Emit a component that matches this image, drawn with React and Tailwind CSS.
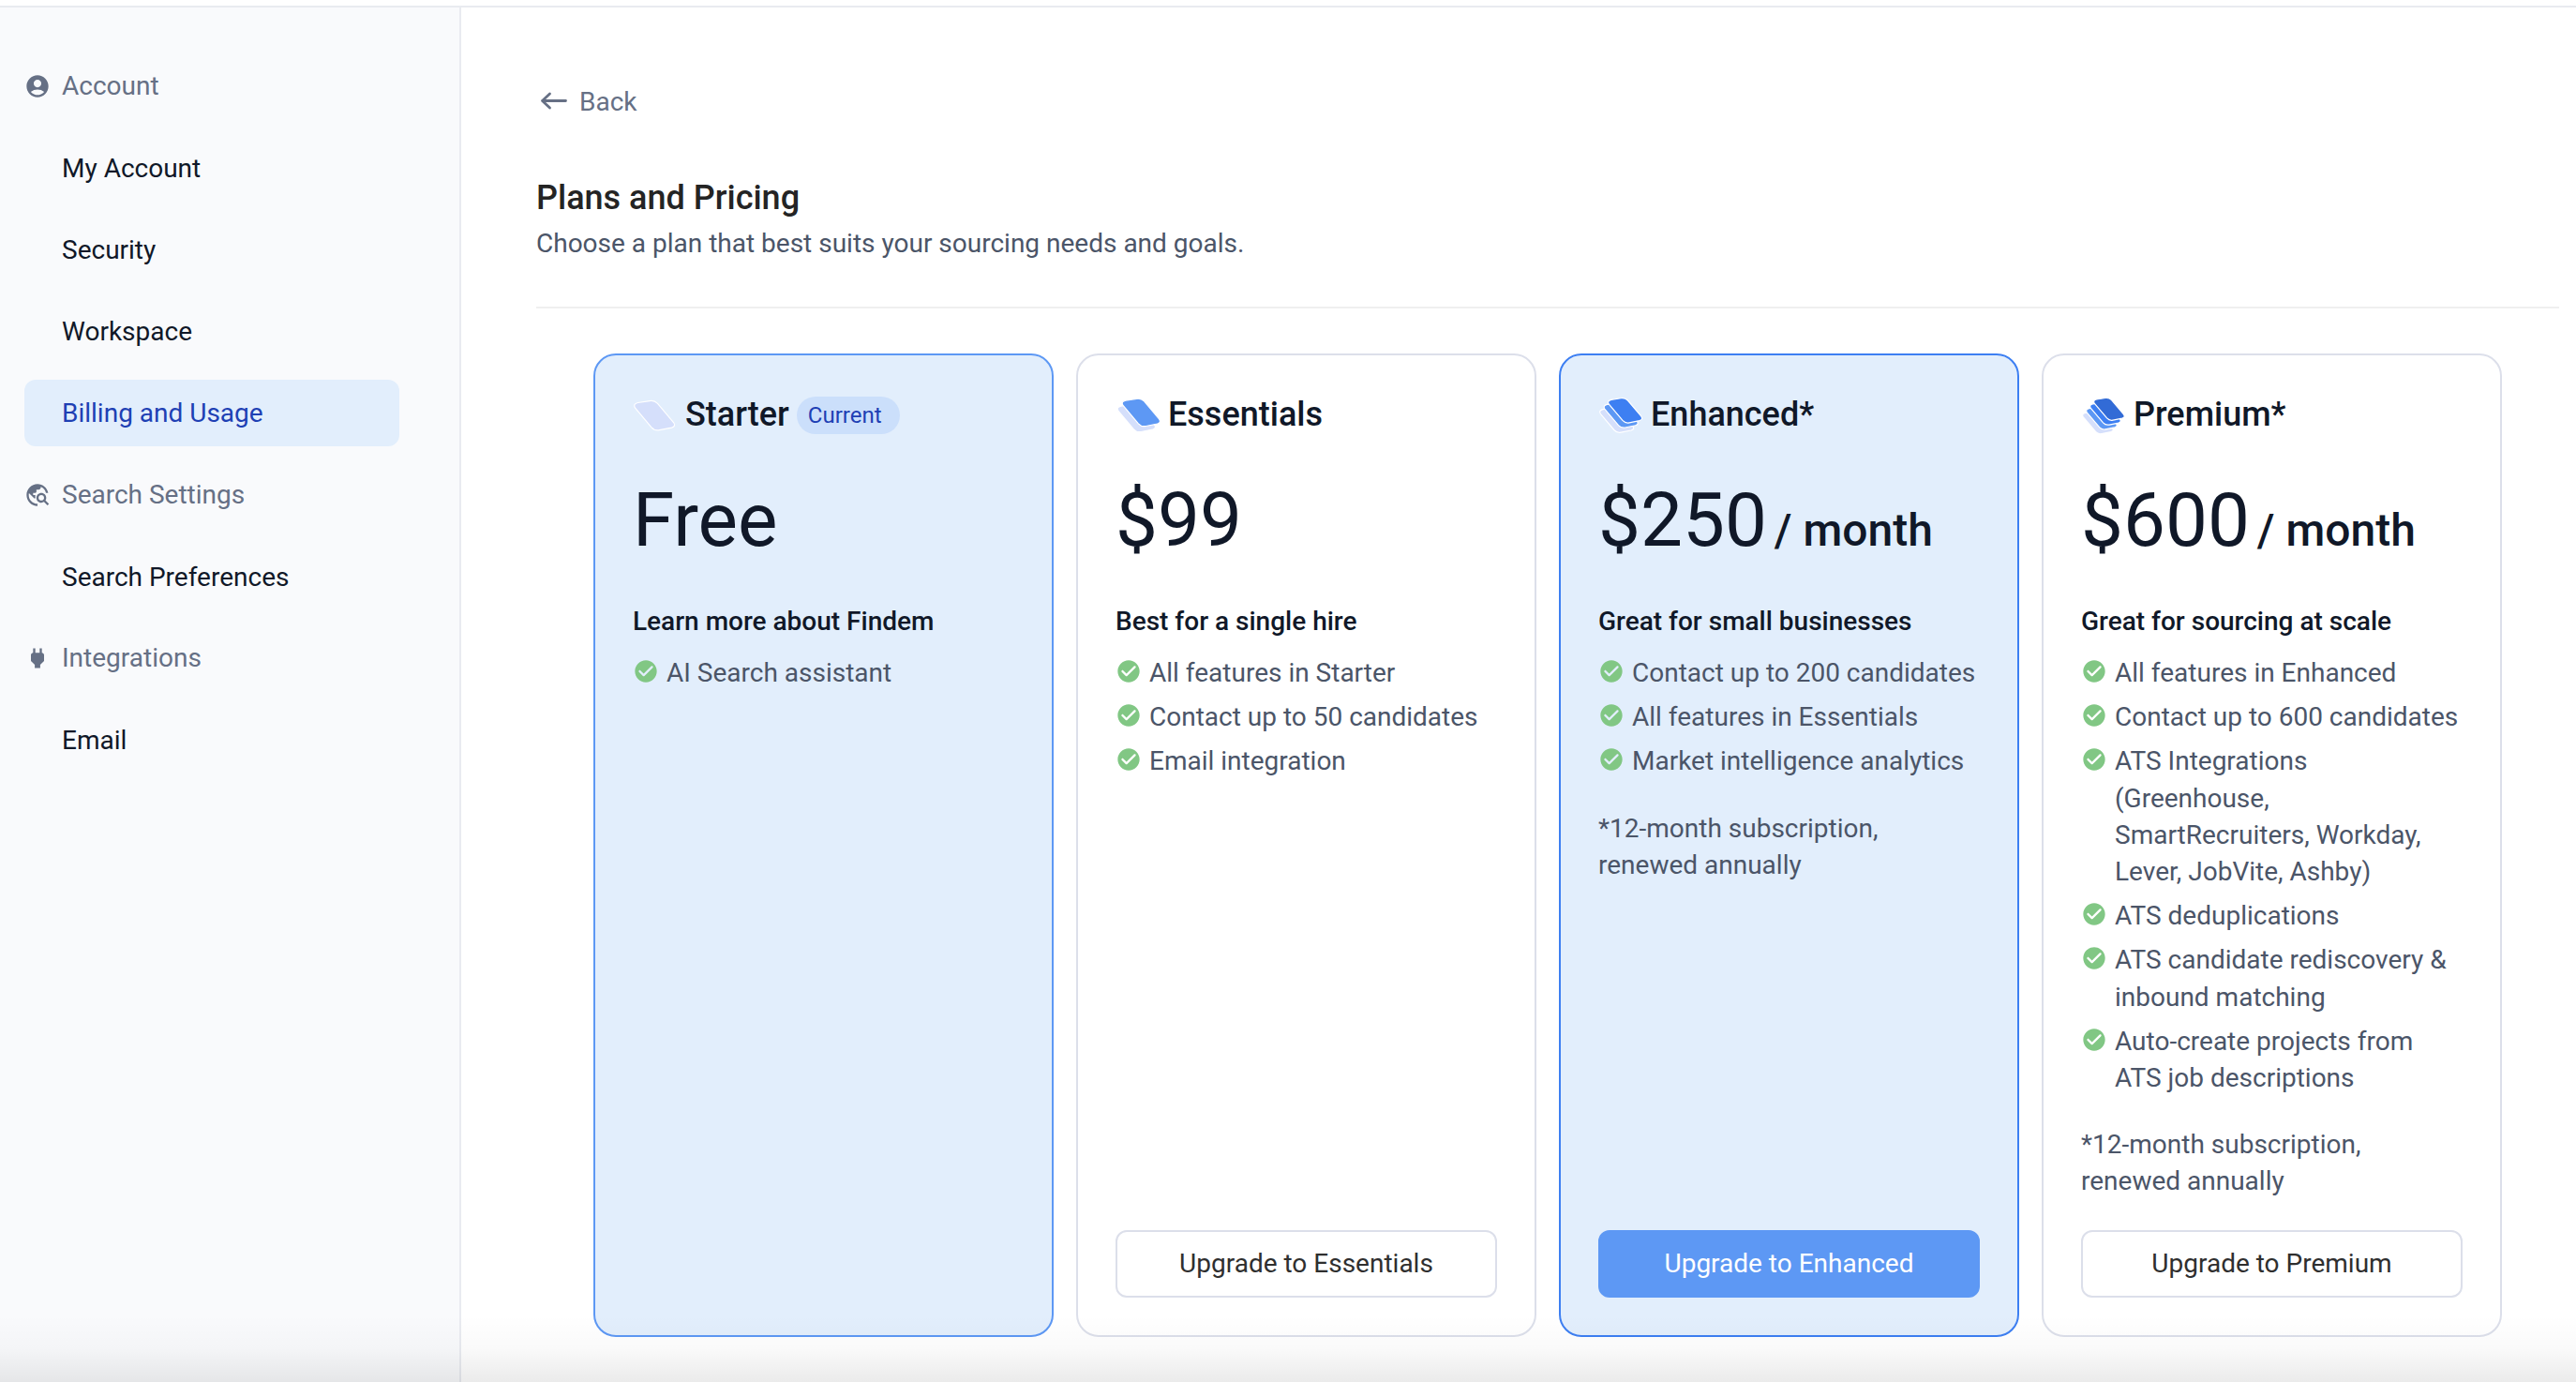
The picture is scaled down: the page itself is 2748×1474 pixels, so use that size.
import React from 'react';
import { MdAccountCircle, MdTravelExplore, MdPower } from 'react-icons/md';

const navSections = [
  {
    title: 'Account',
    icon: MdAccountCircle,
    items: ['My Account', 'Security', 'Workspace', 'Billing and Usage'],
  },
  { title: 'Search Settings', icon: MdTravelExplore, items: ['Search Preferences'] },
  { title: 'Integrations', icon: MdPower, items: ['Email'] },
];

const plans = [
  {
    name: 'Starter',
    price: 'Free',
    tagline: 'Learn more about Findem',
    features: ['AI Search assistant'],
    logo: { scale: 1, layers: [['#d5dffb', 1.5, 5.3]] },
    current: true,
    card: 'border-[#5d98f4] bg-[#e2eefc]',
  },
  {
    name: 'Essentials',
    price: '$99',
    tagline: 'Best for a single hire',
    features: ['All features in Starter', 'Contact up to 50 candidates', 'Email integration'],
    logo: { scale: 0.94, layers: [['#d5dffb', 2, 9], ['#5d98f4', 7, 3]] },
    card: 'border-[#dcdfea] bg-transparent',
    button: 'border-[#dcdfea] bg-white text-[#2f2f2f]',
  },
  {
    name: 'Enhanced',
    price: '$250',
    monthly: true,
    tagline: 'Great for small businesses',
    features: ['Contact up to 200 candidates', 'All features in Essentials', 'Market intelligence analytics'],
    logo: { scale: 0.84, layers: [['#d5dffb', 1.5, 12.8], ['#5d98f4', 6, 7.6], ['#3d7ff2', 10.4, 2.5]] },
    card: 'border-[#3d7ff2] bg-[#e2eefc]',
    button: 'border-[#5d98f4] bg-[#5d98f4] text-white',
  },
  {
    name: 'Premium',
    price: '$600',
    monthly: true,
    tagline: 'Great for sourcing at scale',
    features: [
      'All features in Enhanced',
      'Contact up to 600 candidates',
      'ATS Integrations (Greenhouse, SmartRecruiters, Workday, Lever, JobVite, Ashby)',
      'ATS deduplications',
      'ATS candidate rediscovery & inbound matching',
      'Auto-create projects from ATS job descriptions',
    ],
    logo: {
      scale: 0.76,
      layers: [['#d5dffb', 1.5, 16.8], ['#5d98f4', 5.5, 12], ['#3d7ff2', 9.5, 7.2], ['#326bd6', 13.5, 2.3]],
    },
    card: 'border-[#dcdfea] bg-transparent',
    button: 'border-[#dcdfea] bg-white text-[#2f2f2f]',
  },
];

// stacked tiles, one more per plan level
const PlanLogo = ({ scale, layers }) => (
  <svg className="w-[46px] h-[40px] shrink-0 overflow-visible" viewBox="0 0 46 40">
    {layers.map(([color, x, y]) => (
      <path
        key={color}
        d="M4 2.200L16.500.3Q21.500-.5 25 3L42 23.200Q45 27.300 40 28.800L27 31.400Q22 32.400 18.500 28.500L.9 7.700Q-1.500 3.600 4 2.200Z"
        fill={color}
        stroke="white"
        strokeWidth={1.2 / scale}
        transform={`translate(${x} ${y}) scale(${scale})`}
      />
    ))}
  </svg>
);

const CheckIcon = () => (
  <svg className="w-7 h-7 shrink-0 mt-1" viewBox="0 0 24 24" fill="#81c784">
    <path d="M12 2C6.480 2 2 6.480 2 12s4.480 10 10 10 10-4.480 10-10S17.520 2 12 2zM9.290 16.290 5.700 12.700a.996.996 0 0 1 0-1.410c.39-.39 1.020-.39 1.410 0L10 14.170l6.880-6.880c.39-.39 1.020-.39 1.410 0s.39 1.020 0 1.410l-7.590 7.590c-.38.39-1.020.39-1.410 0z" />
  </svg>
);

const Sidebar = () => (
  <aside className="w-[492px] shrink-0 bg-[#f9fafc] border-r-2 border-[#e9ebf0] pt-[40.7px] pl-[26px] pr-[64px]">
    {navSections.map(({ title, icon: Icon, items }) => (
      <div key={title}>
        <div className="flex items-center h-[87.15px] gap-3 text-[#667085]">
          <Icon className="w-7 h-7" />
          <span>{title}</span>
        </div>
        {items.map((item) => (
          <div key={item} className="flex items-center h-[87.15px]">
            <a
              className={`flex items-center h-[71px] w-full pt-px pl-10 rounded-xl ${
                item === 'Billing and Usage' ? 'bg-[#e2eefc] text-[#1e40b4]' : 'text-[#101828]'
              }`}
            >
              {item}
            </a>
          </div>
        ))}
      </div>
    ))}
  </aside>
);

const PlanCard = ({ plan }) => (
  <div className={`flex flex-col w-[491px] h-[1049px] rounded-3xl border-2 p-10 text-[#101828] ${plan.card}`}>
    <div className="flex items-center h-[46px]">
      <PlanLogo scale={plan.logo.scale} layers={plan.logo.layers} />
      <h2 className="ml-[10px] text-[36px] font-medium">
        {plan.name}
        {plan.monthly && '*'}
      </h2>
      {plan.current && (
        <span className="flex items-center h-10 mt-[2px] ml-2 pl-3 pr-[19px] rounded-[20px] bg-[#cbdffb] text-2xl text-[#1e40b4]">
          Current
        </span>
      )}
    </div>

    <div className="flex items-baseline mt-[31px] h-[118px] leading-[118px]">
      <span className="text-[80px]">{plan.price}</span>
      {plan.monthly && <span className="ml-2 text-[48px] font-medium">/ month</span>}
    </div>

    <h3 className="mt-[29px] leading-[40px] font-medium">{plan.tagline}</h3>
    <ul className="flex flex-col gap-2 mt-[15px] text-[#4b5568] leading-[39.2px]">
      {plan.features.map((feature) => (
        <li key={feature} className="flex gap-2">
          <CheckIcon />
          <span>{feature}</span>
        </li>
      ))}
    </ul>
    {plan.monthly && (
      <p className="mt-8 text-[#4b5568] leading-[39.2px]">
        *12-month subscription,
        <br />
        renewed annually
      </p>
    )}

    {plan.button && (
      <button className={`mt-auto h-[72px] w-full rounded-xl border-2 ${plan.button}`}>
        Upgrade to {plan.name}
      </button>
    )}
  </div>
);

export default function App() {
  return (
    <div className="relative flex flex-col w-[2748px] h-[1474px] overflow-hidden bg-white font-['Roboto',sans-serif] text-[28px] leading-[40px]">
      <header className="h-2 shrink-0 border-b-2 border-[#e9ebf0]" />
      <div className="flex flex-1 min-h-0">
        <Sidebar />
        <main className="flex-1 pl-20 pr-[18px]">
          <button className="flex items-center gap-3 mt-[81px] text-[#667085]">
            <svg className="w-8 h-8 ml-[2px]" viewBox="0 0 32 32" fill="none" stroke="currentColor" strokeWidth="2.8" strokeLinecap="round" strokeLinejoin="round">
              <path d="M29.500 14.500H4.500M12.500 7L4.500 14.500l8 7.500" />
            </svg>
            Back
          </button>
          <h1 className="mt-[61px] text-[36px] leading-[42px] font-medium text-[#242424]">Plans and Pricing</h1>
          <p className="mt-2 text-[#4b5568]">Choose a plan that best suits your sourcing needs and goals.</p>
          <hr className="mt-[47px] border-t-2 border-[#efefef]" />
          <div className="flex gap-6 mt-[48px] ml-[61px]">
            {plans.map((plan) => (
              <PlanCard key={plan.name} plan={plan} />
            ))}
          </div>
        </main>
      </div>
      {/* soft shade along the bottom edge */}
      <div className="absolute inset-x-0 bottom-0 h-[72px] bg-linear-to-t from-black/8 via-black/2 to-transparent" />
    </div>
  );
}
